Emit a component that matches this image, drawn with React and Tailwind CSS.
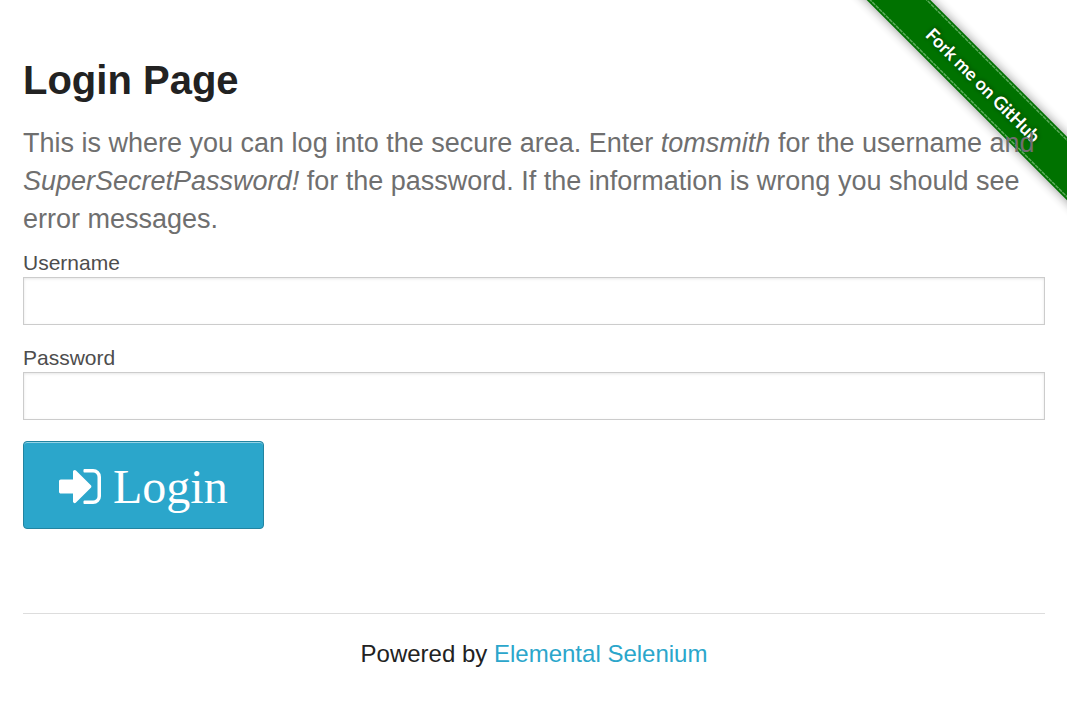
import React from "react";

function ForkRibbon() {
  return (
    <a
      href="https://github.com/tourdedave/the-internet"
      aria-label="Fork me on GitHub"
      className="absolute top-0 right-0 z-0"
    >
      <svg width="224" height="224" viewBox="0 0 224 224" className="block">
        <defs>
          <filter id="band-shadow" x="-20%" y="-60%" width="140%" height="220%">
            <feGaussianBlur stdDeviation="6" />
          </filter>
          <filter id="text-shadow" x="-20%" y="-60%" width="140%" height="220%">
            <feGaussianBlur stdDeviation="2" />
          </filter>
        </defs>
        <g transform="translate(140.5 85) rotate(45)">
          <rect x="-190" y="-22" width="380" height="44" fill="#000" opacity="0.45" filter="url(#band-shadow)" />
          <rect x="-190" y="-22.5" width="380" height="45" fill="#007200" />
          <path d="M-190 -20H190M-190 20H190" stroke="#5aab5a" strokeWidth="1.5" strokeDasharray="4 0.8" />
          <g
            fontFamily="Lato, 'Open Sans', sans-serif"
            fontSize="18"
            fontWeight="700"
            textAnchor="middle"
          >
            <text x="0" y="7" fill="#000" opacity="0.5" filter="url(#text-shadow)" aria-hidden="true">
              Fork me on GitHub
            </text>
            <text x="0" y="7" fill="#fff">Fork me on GitHub</text>
          </g>
        </g>
      </svg>
    </a>
  );
}

function SignInIcon() {
  return (
    <svg viewBox="0 256 1536 1280" className="h-[35px] w-[42px]" fill="currentColor" aria-hidden="true">
      <path d="M1184 896q0 26-19 45l-544 544q-19 19-45 19t-45-19-19-45v-288h-448q-26 0-45-19t-19-45v-384q0-26 19-45t45-19h448v-288q0-26 19-45t45-19 45 19l544 544q19 19 19 45zm352-352v704q0 119-84.5 203.5t-203.5 84.5h-320q-13 0-22.5-9.5t-9.5-22.5q0-4-1-20t-.5-26.5 3-23.5 10-19.5 20.5-6.5h320q66 0 113-47t47-113v-704q0-66-47-113t-113-47h-312l-11.5-1-11.5-3-8-5.5-7-9-2-13.5q0-4-1-20t-.5-26.5 3-23.5 10-19.5 20.5-6.5h320q119 0 203.5 84.5t84.5 203.5z" />
    </svg>
  );
}

function Field({ id, label, type }) {
  return (
    <div className="mb-[21px]">
      <label htmlFor={id} className="block pb-[2px] text-[21px] leading-[24px] text-[#4d4d4d]">
        {label}
      </label>
      <input
        id={id}
        name={id}
        type={type}
        className="block h-12 w-full border border-[#cccccc] bg-white px-3 text-[21px] shadow-[inset_0_1px_3px_rgba(0,0,0,0.1)] outline-none focus:border-[#999999]"
      />
    </div>
  );
}

export default function App() {
  return (
    <div className="relative overflow-hidden bg-white pr-[22px] pb-10 pl-[23px] font-['Liberation_Sans',Arial,sans-serif] text-[#222222]">
      <ForkRibbon />
      <main className="pointer-events-none relative z-10 pt-[50px]">
        <h2 className="text-[40px] leading-[60px] font-bold">Login Page</h2>
        <h4 className="mt-[14px] text-[27px] leading-[38px] text-[#6f6f6f]">
          This is where you can log into the secure area. Enter <em>tomsmith</em> for the username and{" "}
          <em>SuperSecretPassword!</em> for the password. If the information is wrong you should see error
          messages.
        </h4>
        <form className="pointer-events-auto mt-[13px]" onSubmit={(e) => e.preventDefault()}>
          <Field id="username" label="Username" type="text" />
          <Field id="password" label="Password" type="password" />
          <button
            type="submit"
            className="flex h-[88px] cursor-pointer items-center gap-3 rounded-[4px] border border-[#2284a1] bg-[#2ba6cb] px-[35px] pt-[3px] font-['Liberation_Serif','Times_New_Roman',serif] text-[48px] leading-[52px] text-white shadow-[inset_0_1px_0_rgba(255,255,255,0.5)] hover:bg-[#2284a1]"
          >
            <SignInIcon />
            Login
          </button>
        </form>
      </main>
      <footer className="mt-[84px] border-t border-[#dddddd] pt-[22px] text-center text-[24px] leading-[36px]">
        Powered by{" "}
        <a href="http://elementalselenium.com/" className="text-[#2ba6cb] hover:text-[#2284a1]">
          Elemental Selenium
        </a>
      </footer>
    </div>
  );
}
